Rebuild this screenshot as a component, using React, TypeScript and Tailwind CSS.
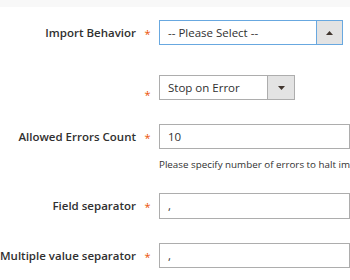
const font = { fontFamily: '"Open Sans", "Liberation Sans", sans-serif' }

function Star({ className = 'pt-[4px]' }: { className?: string }) {
  return <span className={`w-[23px] text-center text-[11px] text-[#eb5202] ${className}`}>*</span>
}

function Label({ text }: { text: string }) {
  return (
    <div className="w-[136px] shrink-0 whitespace-nowrap text-right text-[11.5px] font-semibold text-[#303030]">
      {text}
    </div>
  )
}

function Arrow({ up }: { up?: boolean }) {
  return (
    <svg width="7" height="4" viewBox="0 0 7 4">
      {up ? <path d="M0 4 L3.5 0 L7 4 Z" fill="#41362f" /> : <path d="M0 0 L3.5 4 L7 0 Z" fill="#41362f" />}
    </svg>
  )
}

export default function App() {
  return (
    <div className="h-[280px] w-[350px] overflow-hidden bg-white" style={font}>
      <div className="h-[7px] bg-[#f8f8f8]" />
      <div className="mt-[13px] flex items-center">
        <Label text="Import Behavior" />
        <Star />
        <div className="flex h-[25px] w-[184px] border border-[#68a8e0]">
          <div className="flex flex-1 items-center whitespace-nowrap pl-[8px] text-[11.5px] text-[#303030]">
            -- Please Select --
          </div>
          <div className="flex w-[26px] items-center justify-center border-l border-[#68a8e0] bg-[#e3e3e3]">
            <Arrow up />
          </div>
        </div>
      </div>
      <div className="mt-[30px] flex h-[25px] items-start">
        <div className="w-[136px] shrink-0" />
        <Star className="mt-[12px]" />
        <div className="flex h-[25px] w-[136px] border border-[#adadad]">
          <div className="flex flex-1 items-center whitespace-nowrap pl-[8px] text-[11.5px] text-[#303030]">
            Stop on Error
          </div>
          <div className="flex w-[27px] items-center justify-center border-l border-[#adadad] bg-[#e3e3e3]">
            <Arrow />
          </div>
        </div>
      </div>
      <div className="mt-[24px] flex items-center">
        <Label text="Allowed Errors Count" />
        <Star />
        <div className="flex h-[25px] flex-1 items-center border border-[#adadad] pl-[8px] text-[11.5px] text-[#303030]">
          10
        </div>
      </div>
      <div className="mt-[9px] whitespace-nowrap pl-[159px] text-[9.8px] text-[#303030]">
        Please specify number of errors to halt import process
      </div>
      <div className="mt-[20px] flex items-center">
        <Label text="Field separator" />
        <Star />
        <div className="flex h-[26px] flex-1 items-center border border-[#adadad] pl-[8px] text-[11.5px] text-[#303030]">
          ,
        </div>
      </div>
      <div className="mt-[24px] flex items-center">
        <Label text="Multiple value separator" />
        <Star />
        <div className="flex h-[25px] flex-1 items-center border border-[#adadad] pl-[8px] text-[11.5px] text-[#303030]">
          ,
        </div>
      </div>
    </div>
  )
}
